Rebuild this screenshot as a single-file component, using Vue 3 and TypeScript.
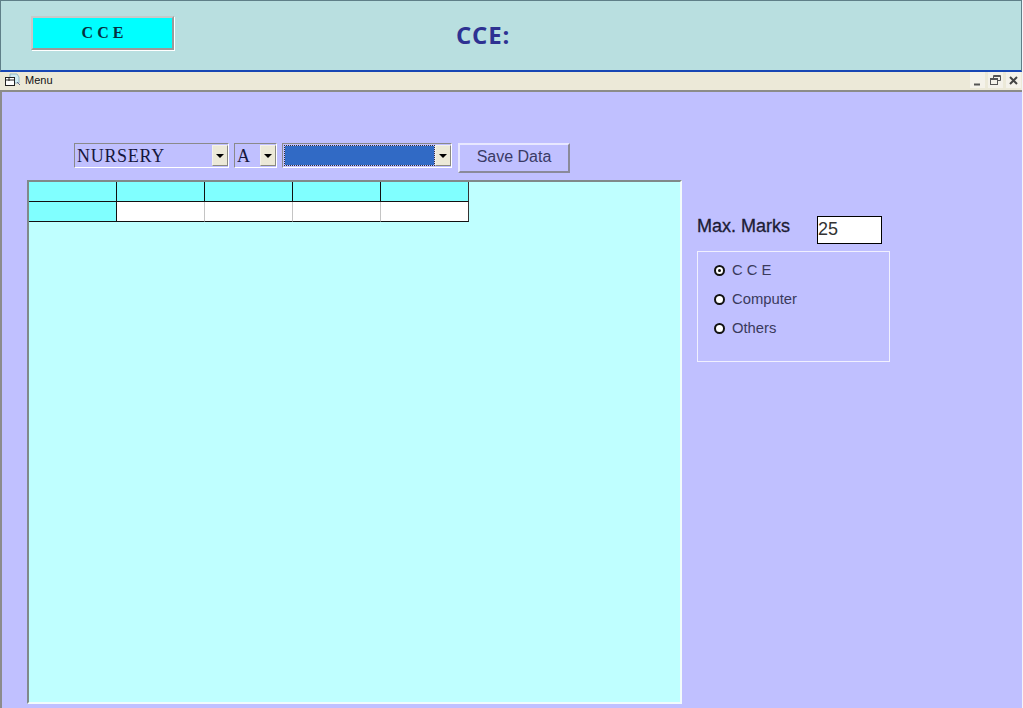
<template>
  <div class="page">
    <header class="banner">
      <div class="banner__tab">C C E</div>
      <h1>CCE:</h1>
    </header>

    <div class="menu-bar">
      <svg class="menu-bar__icon" width="18" height="14" viewBox="0 0 18 14">
        <path d="M6 1h7l2 3v6H6z" fill="#cfeaf2" stroke="#8fb6c4" />
        <rect x="1.500" y="4.500" width="9" height="8" fill="#fff" stroke="#222" />
        <path d="M2 7h8M5 5v3" stroke="#222" />
        <path d="M13 9l3 3" stroke="#668" />
      </svg>
      <span>Menu</span>
      <div class="menu-bar__controls">
        <span class="ctl">
          <svg width="9" height="11" viewBox="0 0 9 11"><path d="M1 9.500h6" stroke="#555" stroke-width="2" /></svg>
        </span>
        <span class="ctl">
          <svg width="11" height="11" viewBox="0 0 11 11" fill="none" stroke="#555">
            <path d="M3.500 3V.500h7v5H8" />
            <rect x=".500" y="3.500" width="7" height="6" />
            <path d="M1 4.500h6M4 1.500h6" />
          </svg>
        </span>
        <span class="ctl">
          <svg width="9" height="9" viewBox="0 0 9 9"><path d="M1 1l7 7M8 1L1 8" stroke="#444" stroke-width="2" /></svg>
        </span>
      </div>
    </div>

    <main class="form">
      <div class="toolbar">
        <div class="combo combo--class">
          <span class="combo__value">NURSERY</span>
          <span class="combo__arrow"></span>
        </div>
        <div class="combo combo--section">
          <span class="combo__value">A</span>
          <span class="combo__arrow"></span>
        </div>
        <div class="combo combo--subject">
          <span class="combo__value combo__value--selected"></span>
          <span class="combo__arrow"></span>
        </div>
        <button class="save" type="button">Save Data</button>
      </div>

      <div class="content">
        <div class="sheet">
          <div class="sheet__row" v-for="row in rows" :key="row">
            <div
              v-for="col in cols"
              :key="col"
              class="cell"
              :class="{ 'cell--fixed': row === 0 || col === 0 }"
            ></div>
          </div>
        </div>

        <aside class="side">
          <div class="marks">
            <label>Max. Marks</label>
            <div class="marks__input">25</div>
          </div>
          <div class="options">
            <div class="option" v-for="item in options" :key="item">
              <span class="radio" :class="{ 'radio--on': item === selected }"></span>
              <span>{{ item }}</span>
            </div>
          </div>
        </aside>
      </div>
    </main>
  </div>
</template>

<script setup lang="ts">
const rows = [0, 1]
const cols = [0, 1, 2, 3, 4]
const options = ['C C E', 'Computer', 'Others']
const selected = 'C C E'
</script>

<style>
html,
body {
  overflow: hidden;
}
</style>

<style scoped>
.page {
  box-sizing: border-box;
  width: 1023px;
  height: 708px;
  padding-right: 1px;
  overflow: hidden;
  background: #f4f4fa;
  font-family: 'Liberation Sans', Arial, sans-serif;
}

.banner {
  display: flex;
  align-items: flex-start;
  box-sizing: border-box;
  height: 72px;
  padding: 15px 0 0 30px;
  border-top: 1px solid #5f7f88;
  border-left: 1px solid #5f7f88;
  border-right: 1px solid #5f7f88;
  border-bottom: 2px solid #1746b4;
  background: #b9dfe0;
}

.banner__tab {
  box-sizing: border-box;
  width: 143px;
  height: 34px;
  border: 2px solid;
  border-color: #c8c8c8 #9a9a9a #9a9a9a #c8c8c8;
  box-shadow: 1px 1px 0 #fff;
  background: #00ffff;
  color: #06303f;
  font-family: 'Liberation Serif', serif;
  font-size: 16px;
  font-weight: 700;
  line-height: 30px;
  text-align: center;
}

.banner h1 {
  margin: 4px 0 0 282px;
  color: #2e3192;
  font-family: 'Open Sans', sans-serif;
  font-size: 24px;
  font-weight: 700;
  letter-spacing: 0.8px;
  line-height: 30px;
}

.menu-bar {
  display: flex;
  align-items: center;
  box-sizing: border-box;
  height: 20px;
  padding: 0 0 2px 4px;
  border-bottom: 2px solid #8c8c88;
  background: #ece9d8;
  color: #111;
  font-size: 11px;
}

.menu-bar__icon {
  margin-right: 3px;
}

.menu-bar__controls {
  display: flex;
  gap: 3px;
  margin-left: auto;
  margin-right: 1px;
}

.ctl {
  display: flex;
  align-items: center;
  justify-content: center;
  width: 15px;
  height: 16px;
  background: #f4f2ea;
}

.form {
  box-sizing: border-box;
  height: 616px;
  padding-top: 51px;
  border-left: 2px solid #8c8c8c;
  background: #c0c0ff;
}

.toolbar {
  display: flex;
  align-items: flex-start;
  gap: 5px;
  padding-left: 72px;
}

.combo {
  display: flex;
  align-items: center;
  box-sizing: border-box;
  height: 25px;
  padding: 1px 0 1px 2px;
  border: 1px solid;
  border-color: #8a8a8a #fff #fff #8a8a8a;
}

.combo--class {
  width: 155px;
}

.combo--section {
  width: 43px;
}

.combo--subject {
  width: 170px;
}

.combo__value {
  flex: 1;
  overflow: hidden;
  color: #16163c;
  font-family: 'Liberation Serif', serif;
  font-size: 18px;
  letter-spacing: 0.7px;
  line-height: 20px;
}

.combo__value--selected {
  align-self: stretch;
  margin: 1px 1px 1px 0;
  outline: 1px dotted #333;
  background: #316ac5;
}

.combo__arrow {
  position: relative;
  flex: none;
  box-sizing: border-box;
  width: 16px;
  height: 21px;
  border: 1px solid;
  border-color: #f4f2ea #8a8a80 #8a8a80 #f4f2ea;
  background: #ece9d8;
}

.combo__arrow::after {
  position: absolute;
  top: 8px;
  left: 3px;
  border-top: 4px solid #000;
  border-left: 4px solid transparent;
  border-right: 4px solid transparent;
  content: '';
}

.save {
  box-sizing: border-box;
  width: 112px;
  height: 30px;
  margin-left: 1px;
  padding: 0 0 2px;
  border: 2px solid;
  border-color: #e8e8ff #8a8a9a #8a8a9a #e8e8ff;
  background: #c0c0ff;
  color: #3a3a66;
  font-family: 'Liberation Sans', Arial, sans-serif;
  font-size: 16px;
}

.content {
  display: flex;
  align-items: flex-start;
  margin-top: 7px;
  padding-left: 25px;
}

.sheet {
  flex: none;
  box-sizing: border-box;
  width: 655px;
  height: 524px;
  border: 2px solid;
  border-color: #808a8a #f2fbfb #f2fbfb #808a8a;
  background: #bfffff;
}

.sheet__row {
  display: flex;
}

.cell {
  box-sizing: border-box;
  width: 88px;
  height: 20px;
  border-right: 1px solid #c4c4c4;
  border-bottom: 1px solid #111;
  background: #fff;
}

.cell--fixed {
  border-right-color: #111;
  background: #80ffff;
}

.cell:last-child {
  border-right-color: #333;
}

.side {
  width: 193px;
  margin: 36px 0 0 15px;
}

.marks {
  display: flex;
  align-items: flex-start;
  height: 35px;
  color: #1c1c34;
  font-size: 18px;
}

.marks label {
  width: 120px;
  -webkit-text-stroke: 0.3px #1c1c34;
  line-height: 20px;
}

.marks__input {
  box-sizing: border-box;
  width: 65px;
  height: 28px;
  padding: 1px 0 0;
  border: 1px solid #000;
  background: #fff;
  color: #333;
  font-size: 18px;
  line-height: 22px;
}

.options {
  display: flex;
  flex-direction: column;
  gap: 13px;
  box-sizing: border-box;
  height: 111px;
  padding: 10px 0 0 17px;
  border: 1px solid #f0f0ff;
}

.option {
  display: flex;
  align-items: center;
  gap: 7px;
  height: 16px;
  color: #3a3a5c;
  font-size: 14.800px;
}

.radio {
  position: relative;
  box-sizing: border-box;
  width: 11px;
  height: 11px;
  margin-left: -1px;
  border: 2px solid #111;
  border-radius: 50%;
  background: #fff;
}

.radio--on::after {
  position: absolute;
  top: 2px;
  left: 2px;
  width: 3px;
  height: 3px;
  border-radius: 50%;
  background: #111;
  content: '';
}
</style>
